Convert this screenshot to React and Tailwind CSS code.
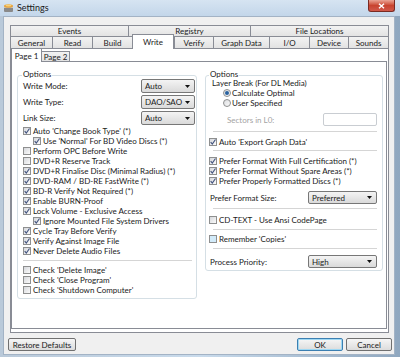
import { useState } from 'react'

const FONT = "font-['Lato','Open_Sans',sans-serif]"

function Box({ checked, tint }) {
  return (
    <span
      className={`relative flex h-[8px] w-[8px] shrink-0 items-center justify-center border border-[#8e8f8f] ${
        tint ? 'bg-[#d2ebfa]' : 'bg-linear-to-br from-[#d6d8dc] to-[#fbfbfb]'
      }`}
    >
      {checked && (
        <svg viewBox="0 0 8 8" className="absolute left-[-1px] top-[-1px] h-[8px] w-[8px]">
          <path d="M1.7 4.1 L3.3 6.1 L6.5 1.5" stroke="#44557f" strokeWidth="1.15" fill="none" />
        </svg>
      )}
    </span>
  )
}

function Check({ label, checked, indent, tint }) {
  return (
    <div className={`flex h-[10px] items-center gap-[2px] ${indent ? 'pl-[10px]' : ''}`}>
      <Box checked={checked} tint={tint} />
      <span className="whitespace-nowrap leading-[10px]">{label}</span>
    </div>
  )
}

function Radio({ label, on }) {
  return (
    <div className="flex h-[10px] items-center gap-[1px] pl-[14px]">
      <span className="flex h-[8px] w-[8px] items-center justify-center rounded-full border border-[#8e8f8f] bg-linear-to-br from-[#dcdde0] to-[#fafafa]">
        {on && <span className="h-[4px] w-[4px] rounded-full bg-[#2a62a0]" />}
      </span>
      <span className="whitespace-nowrap leading-[10px]">{label}</span>
    </div>
  )
}

function Combo({ value, className = '' }) {
  return (
    <div
      className={`flex items-center justify-between rounded-[2px] border border-[#777] bg-linear-to-b from-[#f4f4f4] to-[#dadada] pl-[3px] pr-[4px] ${className}`}
    >
      <span className="leading-[10px]">{value}</span>
      <svg width="5" height="3" viewBox="0 0 5 3">
        <path d="M0 0h5L2.5 3z" fill="#111" />
      </svg>
    </div>
  )
}

function Group({ className = '', children, labelLeft }) {
  return (
    <div className={`relative rounded-[3px] border border-[#d5dfe5] ${className}`}>
      <span className={`absolute top-[-6px] bg-white px-[1px] leading-[8px] ${labelLeft}`}>Options</span>
      {children}
    </div>
  )
}

const ROW1 = [
  ['Events', 118],
  ['Registry', 122],
  ['File Locations', 139],
]
const ROW2 = [
  ['General', 42],
  ['Read', 40],
  ['Build', 40],
  ['Write', 42],
  ['Verify', 39],
  ['Graph Data', 56],
  ['I/O', 40],
  ['Device', 39],
  ['Sounds', 41],
]

function Tabs() {
  const [active, setActive] = useState('Write')
  return (
    <div className="ml-[2px] w-[379px]">
      <div className="flex h-[11px]">
        {ROW1.map(([t, w]) => (
          <div
            key={t}
            style={{ width: w }}
            className="flex items-center justify-center border border-b-0 border-r-0 border-[#898c95] bg-linear-to-b from-[#f2f2f2] to-[#e3e3e3] leading-[10px] last:border-r"
          >
            {t}
          </div>
        ))}
      </div>
      <div className="flex h-[12px] items-end">
        {ROW2.map(([t, w]) =>
          t === active ? (
            <div
              key={t}
              style={{ width: w }}
              className="relative z-10 mb-[-1px] flex h-[15px] items-center justify-center border border-b-0 border-[#898c95] bg-white leading-[10px]"
            >
              {t}
            </div>
          ) : (
            <div
              key={t}
              onClick={() => setActive(t)}
              style={{ width: w }}
              className="flex h-[12px] items-center justify-center border border-b-0 border-r-0 border-[#898c95] bg-linear-to-b from-[#f3f3f3] to-[#e2e2e2] leading-[10px] last:border-r"
            >
              {t}
            </div>
          )
        )}
      </div>
      <div className="h-[285px] border border-[#898c95] bg-white pr-[1px]">
        <div className="flex h-[12px] items-end pt-[1px]">
          <div className="relative z-10 mb-[-1px] flex h-[14px] w-[31px] items-center justify-center border border-b-0 border-[#898c95] bg-white leading-[10px]">
            Page 1
          </div>
          <div className="flex h-[10px] w-[28px] items-center justify-center border border-b-0 border-l-0 border-[#898c95] bg-linear-to-b from-[#f3f3f3] to-[#e2e2e2] leading-[10px]">
            Page 2
          </div>
        </div>
        <div className="flex h-[268px] w-[376px] items-start border border-[#898c95] bg-white pl-[5px] pt-[13px]">
          <Group className="w-[180px] pl-[5px] pr-[1px] pt-[3px] pb-[3px]" labelLeft="left-[4px]">
            <div className="flex flex-col gap-[2px]">
              {[
                ['Write Mode:', 'Auto'],
                ['Write Type:', 'DAO/SAO'],
                ['Link Size:', 'Auto'],
              ].map(([l, v]) => (
                <div key={l} className="flex h-[14px] items-center justify-between">
                  <span className="leading-[10px]">{l}</span>
                  <Combo value={v} className="h-[14px] w-[54px]" />
                </div>
              ))}
            </div>
            <div className="mt-[1px]">
              <Check checked label="Auto 'Change Book Type' (*)" />
              <Check checked indent label="Use 'Normal' For BD Video Discs (*)" />
              <Check label="Perform OPC Before Write" />
              <Check label="DVD+R Reserve Track" />
              <Check checked label="DVD+R Finalise Disc (Minimal Radius) (*)" />
              <Check checked label="DVD-RAM / BD-RE FastWrite (*)" />
              <Check checked label="BD-R Verify Not Required (*)" />
              <Check checked label="Enable BURN-Proof" />
              <Check checked label="Lock Volume - Exclusive Access" />
              <Check checked indent label="Ignore Mounted File System Drivers" />
              <Check checked label="Cycle Tray Before Verify" />
              <Check checked label="Verify Against Image File" />
              <Check checked label="Never Delete Audio Files" />
            </div>
            <div className="mr-[3px] mt-[4px] h-px bg-[#d5d5d5]" />
            <div className="mt-[4px]">
              <Check label="Check 'Delete Image'" />
              <Check label="Check 'Close Program'" />
              <Check label="Check 'Shutdown Computer'" />
            </div>
          </Group>
          <Group className="ml-[8px] w-[178px] pl-[3px] pr-[5px] pt-[3px] pb-[2px]" labelLeft="left-[3px]">
            <div className="flex h-[9px] items-center pl-[3px] leading-[9px]">Layer Break (For DL Media)</div>
            <Radio on label="Calculate Optimal" />
            <Radio label="User Specified" />
            <div className="mt-[5px] flex h-[13px] items-center justify-between pl-[18px]">
              <span className="leading-[10px] text-[#a3a3a3]">Sectors in L0:</span>
              <div className="h-[13px] w-[54px] rounded-[2px] border border-[#c9cdd2] bg-white" />
            </div>
            <div className="ml-[4px] mt-[5px] h-px bg-[#d5d5d5]" />
            <div className="mt-[5px]">
              <Check checked label="Auto 'Export Graph Data'" />
            </div>
            <div className="ml-[4px] mt-[3px] h-px bg-[#d5d5d5]" />
            <div className="mt-[5px]">
              <Check checked label="Prefer Format With Full Certification (*)" />
              <Check checked label="Prefer Format Without Spare Areas (*)" />
              <Check checked label="Prefer Properly Formatted Discs (*)" />
            </div>
            <div className="mt-[5px] flex h-[13px] items-center justify-between pl-[1px]">
              <span className="leading-[10px]">Prefer Format Size:</span>
              <Combo value="Preferred" className="h-[13px] w-[69px]" />
            </div>
            <div className="ml-[4px] mt-[4px] h-px bg-[#d5d5d5]" />
            <div className="mt-[6px]">
              <Check label="CD-TEXT - Use Ansi CodePage" />
            </div>
            <div className="ml-[4px] mt-[4px] h-px bg-[#d5d5d5]" />
            <div className="mt-[4px]">
              <Check tint label="Remember 'Copies'" />
            </div>
            <div className="ml-[4px] mt-[4px] h-px bg-[#d5d5d5]" />
            <div className="mt-[6px] flex h-[13px] items-center justify-between pl-[1px]">
              <span className="leading-[10px]">Process Priority:</span>
              <Combo value="High" className="h-[13px] w-[69px]" />
            </div>
          </Group>
        </div>
      </div>
    </div>
  )
}

function Button({ children, primary, className = '' }) {
  return (
    <div
      className={`flex h-[13px] items-center justify-center rounded-[2px] border bg-linear-to-b from-[#f6f6f6] to-[#dcdcdc] leading-[10px] ${
        primary ? 'border-[#3c7fb1] shadow-[inset_0_0_0_1px_#9fd8f3]' : 'border-[#707070]'
      } ${className}`}
    >
      {children}
    </div>
  )
}

export default function App() {
  return (
    <div
      className={`${FONT} flex h-[357px] w-[400px] flex-col overflow-hidden bg-linear-to-r from-[#b9c9d9] via-[#c9dbec] to-[#8fa7bf] text-[8px] text-[#1a1a1a]`}
    >
      <div className="flex h-[16px] items-center bg-linear-to-b from-[#d6e4f2] to-[#c3d6ea] pl-[3px]">
        <svg width="11" height="10" viewBox="0 0 11 10">
          <rect x="1" y="3" width="9" height="6" rx="1" fill="#8a8a8a" />
          <rect x="1" y="3" width="9" height="2" fill="#c9c9c9" />
          <ellipse cx="5.5" cy="3" rx="4.5" ry="1.8" fill="#e8a23a" />
          <ellipse cx="5.5" cy="2.6" rx="3" ry="1" fill="#f6d27a" />
        </svg>
        <span className="ml-[3px] text-[9px] leading-[10px] text-[#1b1b1b]">Settings</span>
        <div className="ml-auto mb-[4px] mr-[5px] flex h-[12px] w-[27px] items-center justify-center self-start rounded-b-[3px] border border-t-0 border-[#7a2a22] bg-linear-to-b from-[#e9a394] via-[#c8432f] to-[#d1584a]">
          <svg width="7" height="6" viewBox="0 0 7 6">
            <path d="M1 0.8 L6 5.2 M6 0.8 L1 5.2" stroke="#fff" strokeWidth="1.4" />
          </svg>
        </div>
      </div>
      <div className="flex flex-1 pb-[2px] pl-[3px] pr-[5px]">
        <div className="flex flex-1 flex-col border border-[#a3b3c5] bg-[#f0f0f0] pl-[4px] pr-[2px] pt-[8px]">
          <Tabs />
          <div className="mt-[5px] flex items-center">
            <Button className="w-[68px]">Restore Defaults</Button>
            <Button primary className="ml-auto w-[46px]">OK</Button>
            <Button className="ml-[3px] w-[46px]">Cancel</Button>
          </div>
        </div>
      </div>
    </div>
  )
}
